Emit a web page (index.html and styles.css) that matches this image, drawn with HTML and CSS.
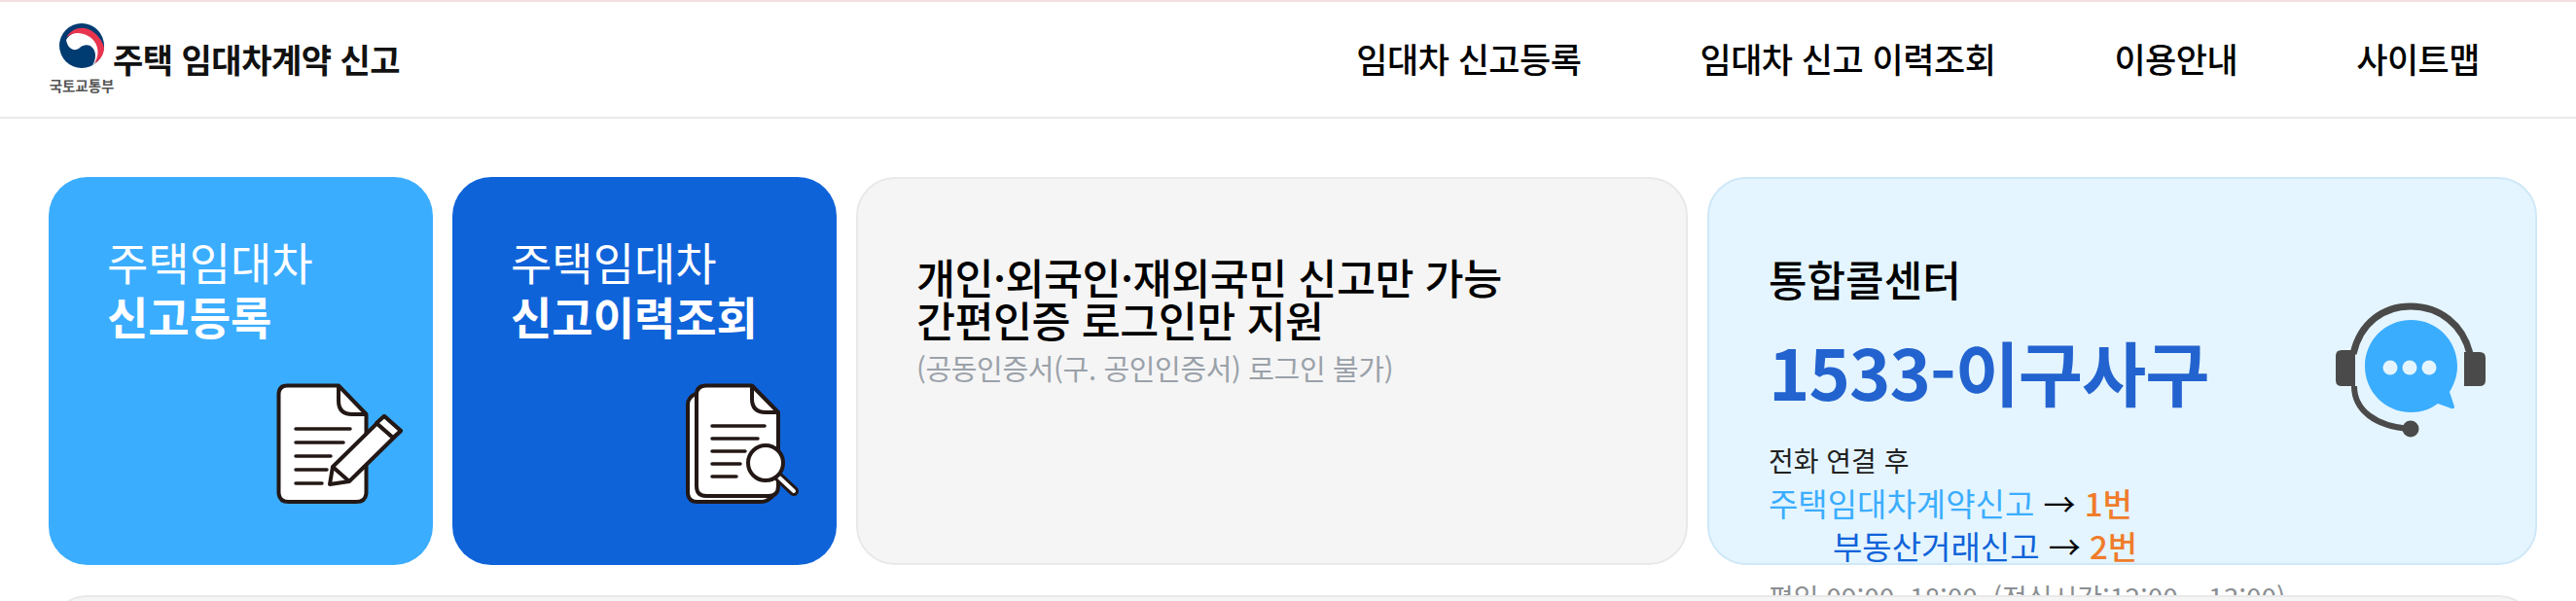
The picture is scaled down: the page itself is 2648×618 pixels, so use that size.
FILE: index.html
```html
<!DOCTYPE html>
<html lang="ko">
<head>
<meta charset="utf-8">
<title>주택 임대차계약 신고</title>
<link rel="stylesheet" href="styles.css">
</head>
<body>
<header class="header">
  <a class="logo">
    <span class="emblem-box">
      <svg class="emblem" viewBox="0 0 48 48" width="48" height="48" aria-hidden="true">
        <circle cx="24" cy="24" r="23" fill="#003b71"/>
        <path d="M8 18C12 11 20 9 27 10C36 12 44 22 44 30C44 36 40 41 35 44C39 38 39 30 35 26C31 22 26 23 22 26C18 30 10 29 8 18Z" fill="#fff"/>
        <path d="M8 16C12 8 20 5 27 6C36 7 45 17 47 26C47 33 43 39 37 42C41 36 42 28 38 21C33 13 22 9 14 12C11 13 9 15 8 16Z" fill="#e8344e"/>
      </svg>
      <span class="ministry">국토교통부</span>
    </span>
    <span class="logo-title">주택 임대차계약 신고</span>
  </a>
  <nav class="nav">
    <a>임대차 신고등록</a>
    <a>임대차 신고 이력조회</a>
    <a>이용안내</a>
    <a>사이트맵</a>
  </nav>
</header>
<main class="main">
  <section class="cards">
    <a class="card card-light">
      <span class="card-title">주택임대차<strong>신고등록</strong></span>
      <svg class="card-icon" viewBox="0 0 170 150" width="170" height="150" aria-hidden="true">
        <path class="ink" d="M35 16.5H88L116.5 46V126Q116.5 136 106 136H37Q26.5 136 26.5 126V26Q26.5 16.5 35 16.5Z" fill="#fff"/>
        <path class="ink" d="M88 16.5V32Q88 46 102 46H116.5" fill="none"/>
        <path class="ink thin" d="M44 61H100M44 75H93M44 89H80M44 103H76M44 117H71"/>
        <path class="ink" d="M135 48L152 63L99 115L79 118L82 100Z" fill="#fff"/>
        <path class="ink" d="M127 55L144 70M82 100L99 115" fill="none"/>
        <path class="ink" d="M135 48L152 63L144 70L127 55Z" fill="#fff"/>
      </svg>
    </a>
    <a class="card card-dark">
      <span class="card-title">주택임대차<strong>신고이력조회</strong></span>
      <svg class="card-icon" viewBox="0 0 170 150" width="170" height="150" aria-hidden="true">
        <path class="ink" d="M37 24Q27 28 27 36V126Q27 136 37 136H102Q110 136 116 128" fill="#fff"/>
        <path class="ink" d="M46 16.5H93L120 44V120Q120 130 110 130H46Q36 130 36 120V26Q36 16.5 46 16.5Z" fill="#fff"/>
        <path class="ink" d="M93 16.5V30Q93 44 107 44H120" fill="none"/>
        <path class="ink thin" d="M52 58H106M52 71H99M52 84H86M52 97H81M52 110H77"/>
        <path d="M121 111L136 125" stroke="#231815" stroke-width="10" stroke-linecap="round"/>
        <path d="M121 111L136 125" stroke="#fff" stroke-width="4" stroke-linecap="round"/>
        <circle class="ink" cx="107" cy="96" r="18" fill="#fff"/>
      </svg>
    </a>
    <div class="card card-notice">
      <p class="notice-main">개인·외국인·재외국민 신고만 가능<br>간편인증 로그인만 지원</p>
      <p class="notice-sub">(공동인증서(구. 공인인증서) 로그인 불가)</p>
    </div>
    <div class="card card-call">
      <div class="call-text">
        <p class="call-head">통합콜센터</p>
        <p class="call-number">1533-이구사구</p>
        <p class="call-line call-intro">전화 연결 후</p>
        <p class="call-line"><span class="sky">주택임대차계약신고</span> → <span class="orange">1번</span></p>
        <p class="call-line call-indent"><span class="blue">부동산거래신고</span> → <span class="orange">2번</span></p>
        <p class="call-line call-hours">평일 09:00~18:00&nbsp; (점심시간:12:00 ~ 13:00)</p>
      </div>
      <svg class="call-icon" viewBox="0 0 220 170" width="220" height="170" aria-hidden="true">
        <path d="M60 107C60 132 82 148 116 151" fill="none" stroke="#4a4a4a" stroke-width="6"/>
        <path d="M59 74C66 42 90 25 118 25C148 25 172 44 179 74" fill="none" stroke="#4a4a4a" stroke-width="7"/>
        <path d="M47 70H61V107H47Q41 107 41 101V76Q41 70 47 70Z" fill="#4a4a4a"/>
        <path d="M173 72H189Q195 72 195 78V101Q195 107 189 107H173Z" fill="#4a4a4a"/>
        <circle cx="118" cy="151" r="8.5" fill="#4a4a4a"/>
        <path d="M118.500 39C145 39 166 60 166 86.500C166 96 163 105 158 113L163 128Q163 131 160 130L146 125C138 131 129 134 118.500 134C92 134 71 113 71 86.500C71 60 92 39 118.500 39Z" fill="#3badff"/>
        <circle cx="97" cy="88" r="7.500" fill="#e4f5ff"/>
        <circle cx="117" cy="88" r="7.500" fill="#e4f5ff"/>
        <circle cx="137" cy="88" r="7.500" fill="#e4f5ff"/>
      </svg>
    </div>
  </section>
  <section class="panel"></section>
</main>
</body>
</html>
```
FILE: styles.css
```css
* { box-sizing: border-box; }
html, body { margin: 0; height: 618px; overflow: hidden; background: #fff; }
body { font-family: "Noto Sans CJK KR", "Noto Sans", sans-serif; color: #000; }
p { margin: 0; }
a { color: inherit; text-decoration: none; }

.header {
  height: 122px;
  border-top: 2px solid #f3dde1;
  border-bottom: 2px solid #e9e9e9;
  display: flex;
  align-items: center;
  justify-content: space-between;
  padding: 0 99px 0 50px;
}
.logo { display: flex; align-items: flex-start; width: 400px; height: 80px; }
.emblem-box { display: flex; flex-direction: column; align-items: center; width: 68px; padding-top: 2px; }
.emblem { filter: blur(.5px); }
.ministry { font-size: 14.5px; line-height: 17px; margin-top: 8px; color: #555; font-weight: 700; white-space: nowrap; }
.logo-title { font-size: 34px; line-height: 40px; font-weight: 700; margin-top: 20px; margin-left: -2px; white-space: nowrap; letter-spacing: -.5px; color: #111; }
.nav { display: flex; gap: 122px; font-size: 35px; line-height: 46px; font-weight: 500; letter-spacing: -.5px; white-space: nowrap; padding-bottom: 2px; }

.main { padding: 60px 40px 0 50px; }
.cards { display: grid; grid-template-columns: 395px 395px 855px 853px; gap: 20px; height: 399px; }
.card { border-radius: 40px; height: 399px; }
.card-light, .card-dark { display: flex; flex-direction: column; padding: 58px 15px 51px 60px; color: #fff; }
.card-dark { padding-right: 10px; }
.card-light { background: #3badff; }
.card-dark { background: #0f63d9; }
.card-title { display: block; font-size: 46px; line-height: 56px; font-weight: 400; }
.card-title strong { display: block; font-weight: 700; }
.card-icon { align-self: flex-end; margin-top: auto; }
.ink { stroke: #231815; stroke-width: 4; stroke-linejoin: round; }
.thin { stroke-width: 3.5; stroke-linecap: round; fill: none; }

.card-notice { background: #f5f5f5; border: 2px solid #e9e9e9; padding: 79px 60px 0; }
.notice-main { font-size: 43.500px; line-height: 44px; font-weight: 500; letter-spacing: -.5px; }
.notice-sub { font-size: 29px; line-height: 44px; color: #9aa1a9; margin-top: 5px; letter-spacing: -.35px; }

.card-call { background: #e4f5ff; border: 2px solid #cfe8f7; padding: 71px 0 0 61px; display: flex; justify-content: space-between; }
.call-text { display: flex; flex-direction: column; }
.call-head { font-size: 43px; line-height: 62px; font-weight: 500; }
.call-number { font-size: 72px; line-height: 100px; font-weight: 700; color: #2363cf; margin-top: 14px; letter-spacing: -1px; }
.call-line { font-size: 33px; line-height: 44px; white-space: nowrap; }
.call-intro { font-size: 28px; margin-top: 20px; color: #222; }
.call-indent { padding-left: 66px; }
.call-hours { font-size: 28px; color: #8b8f93; margin-top: 9px; }
.call-icon { flex: none; margin-top: 35px; margin-right: 26px; }
.sky { color: #3badff; }
.blue { color: #0f63d9; }
.orange { color: #f07c2b; font-weight: 500; }

.panel { position: relative; height: 80px; margin-top: 31px; background: #f5f5f5; border: 2px solid #e9e9e9; border-radius: 40px; }
```
